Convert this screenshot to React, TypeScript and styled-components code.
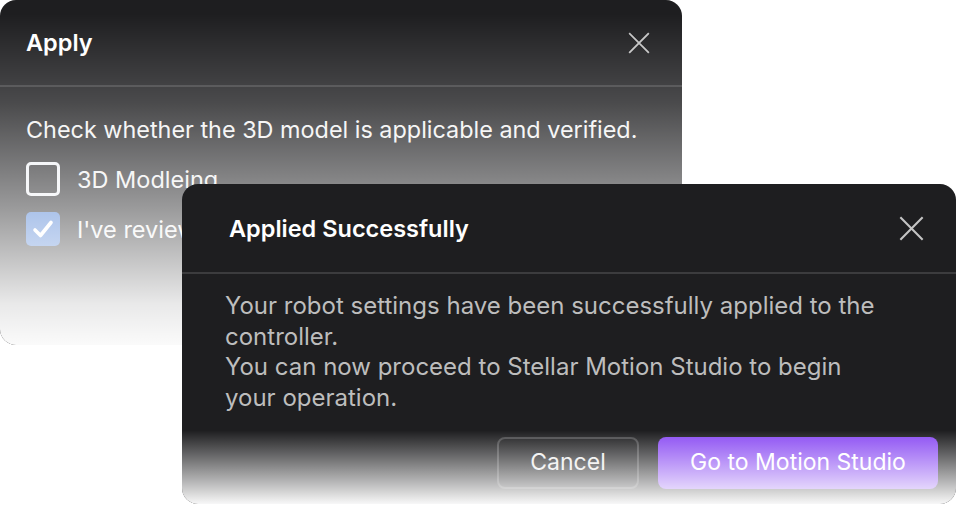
import React from 'react'
import styled, { createGlobalStyle } from 'styled-components'

const GlobalStyle = createGlobalStyle`
  html, body {
    margin: 0;
    padding: 0;
    background: #ffffff;
  }
  body {
    font-family: Inter, "Noto Sans", "Liberation Sans", sans-serif;
    -webkit-font-smoothing: antialiased;
  }
`

const CloseIcon = ({ size }: { size: number }) => (
    <svg width={size} height={size} viewBox="0 0 24 24" fill="none">
        <path d="M2 2L22 22M22 2L2 22" stroke="#c4c4c4" strokeWidth="2" strokeLinecap="square" />
    </svg>
)

const CheckIcon = () => (
    <svg width="26" height="26" viewBox="0 0 26 26" fill="none">
        <path d="M5 14L10.5 19.5L21 6.5" stroke="#ffffff" strokeWidth="3.6" strokeLinecap="round" strokeLinejoin="round" />
    </svg>
)

const App: React.FunctionComponent = () => {
    return (
        <>
            <GlobalStyle />
            <Stage>
                <ApplyDialog>
                    <Header $height={85} $pad={26}>
                        <Title>Apply</Title>
                        <CloseButton><CloseIcon size={22} /></CloseButton>
                    </Header>
                    <Divider />
                    <ApplyBody>
                        <Lead>Check whether the 3D model is applicable and verified.</Lead>
                        <CheckList>
                            <CheckRow>
                                <Box $checked={false} />
                                <CheckLabel>3D Modleing</CheckLabel>
                            </CheckRow>
                            <CheckRow>
                                <Box $checked={true}><CheckIcon /></Box>
                                <CheckLabel>I've reviewed the 3D model and confirmed it</CheckLabel>
                            </CheckRow>
                        </CheckList>
                    </ApplyBody>
                </ApplyDialog>

                <SuccessDialog>
                    <Header $height={88} $pad={47}>
                        <Title>Applied Successfully</Title>
                        <CloseButton><CloseIcon size={25} /></CloseButton>
                    </Header>
                    <Divider />
                    <SuccessBody>
                        <Message>
                            <p>Your robot settings have been successfully applied to the controller.</p>
                            <p>You can now proceed to Stellar Motion Studio to begin your operation.</p>
                        </Message>
                        <Actions>
                            <GhostButton>Cancel</GhostButton>
                            <PrimaryButton>Go to Motion Studio</PrimaryButton>
                        </Actions>
                    </SuccessBody>
                </SuccessDialog>
            </Stage>
        </>
    )
}

export default App


const Stage = styled.div`
  position: relative;
  width: 956px;
  height: 506px;
  overflow: hidden;
`

const Panel = styled.div<{ $fade: string }>`
  position: relative;
  display: flex;
  flex-direction: column;
  background: #1e1e20;
  border-radius: 16px;
  overflow: hidden;

  &::after {
    content: '';
    position: absolute;
    inset: 0;
    pointer-events: none;
    background: linear-gradient(to bottom, ${({ $fade }) => $fade});
  }
`

const ApplyDialog = styled(Panel).attrs({
    $fade: 'rgba(255,255,255,0) 4%, rgba(255,255,255,0.2) 30%, rgba(255,255,255,0.55) 60%, rgba(255,255,255,0.9) 88%, rgba(255,255,255,0.98) 100%',
})`
  width: 682px;
  height: 345px;
`

const SuccessDialog = styled(Panel).attrs({
    $fade: 'rgba(255,255,255,0) 77%, rgba(255,255,255,0.97) 100%',
})`
  position: absolute;
  left: 182px;
  top: 184px;
  width: 774px;
  height: 320px;
`

const Header = styled.div<{ $height: number; $pad: number }>`
  display: flex;
  align-items: center;
  justify-content: space-between;
  height: ${({ $height }) => $height}px;
  padding: 0 32px 0 ${({ $pad }) => $pad}px;
  flex-shrink: 0;
`

const Title = styled.h2`
  margin: 0;
  font-size: 23.5px;
  font-weight: 600;
  color: #ffffff;
`

const CloseButton = styled.span`
  display: flex;
  align-items: center;
  justify-content: center;
`

const Divider = styled.div`
  height: 2px;
  background: #3c3c3e;
  flex-shrink: 0;
`

const ApplyBody = styled.div`
  display: flex;
  flex-direction: column;
  gap: 17px;
  padding: 28px 26px 0;
`

const Lead = styled.p`
  margin: 0;
  font-size: 23.4px;
  line-height: 30px;
  color: #f2f2f2;
`

const CheckList = styled.div`
  display: flex;
  flex-direction: column;
  gap: 16px;
`

const CheckRow = styled.label`
  display: flex;
  align-items: center;
  gap: 17px;
  height: 34px;
`

const Box = styled.span<{ $checked: boolean }>`
  box-sizing: border-box;
  width: 34px;
  height: 34px;
  border-radius: 5px;
  display: flex;
  align-items: center;
  justify-content: center;
  flex-shrink: 0;
  border: ${({ $checked }) => ($checked ? 'none' : '3px solid #eef0f4')};
  background: ${({ $checked }) => ($checked ? '#4378d0' : 'transparent')};
`

const CheckLabel = styled.span`
  font-size: 23.5px;
  color: #f0f0f0;
  white-space: nowrap;
`

const SuccessBody = styled.div`
  display: flex;
  flex-direction: column;
  padding: 17px 18px 0 43px;
`

const Message = styled.div`
  max-width: 666px;

  p {
    margin: 0;
    font-size: 24px;
    line-height: 30.5px;
    color: #bdbdbd;
  }
`

const Actions = styled.div`
  display: flex;
  justify-content: flex-end;
  gap: 19px;
  margin-top: 24px;
`

const ButtonBase = styled.button`
  box-sizing: border-box;
  height: 52px;
  border-radius: 8px;
  font-family: inherit;
  font-size: 23px;
  line-height: 1;
  padding: 0 0 2px;
  cursor: pointer;
`

const GhostButton = styled(ButtonBase)`
  width: 142px;
  background: transparent;
  border: 2px solid #4a4a4c;
  color: #ececec;
`

const PrimaryButton = styled(ButtonBase)`
  width: 280px;
  background: #8a4bf3;
  border: none;
  color: #ffffff;
`
